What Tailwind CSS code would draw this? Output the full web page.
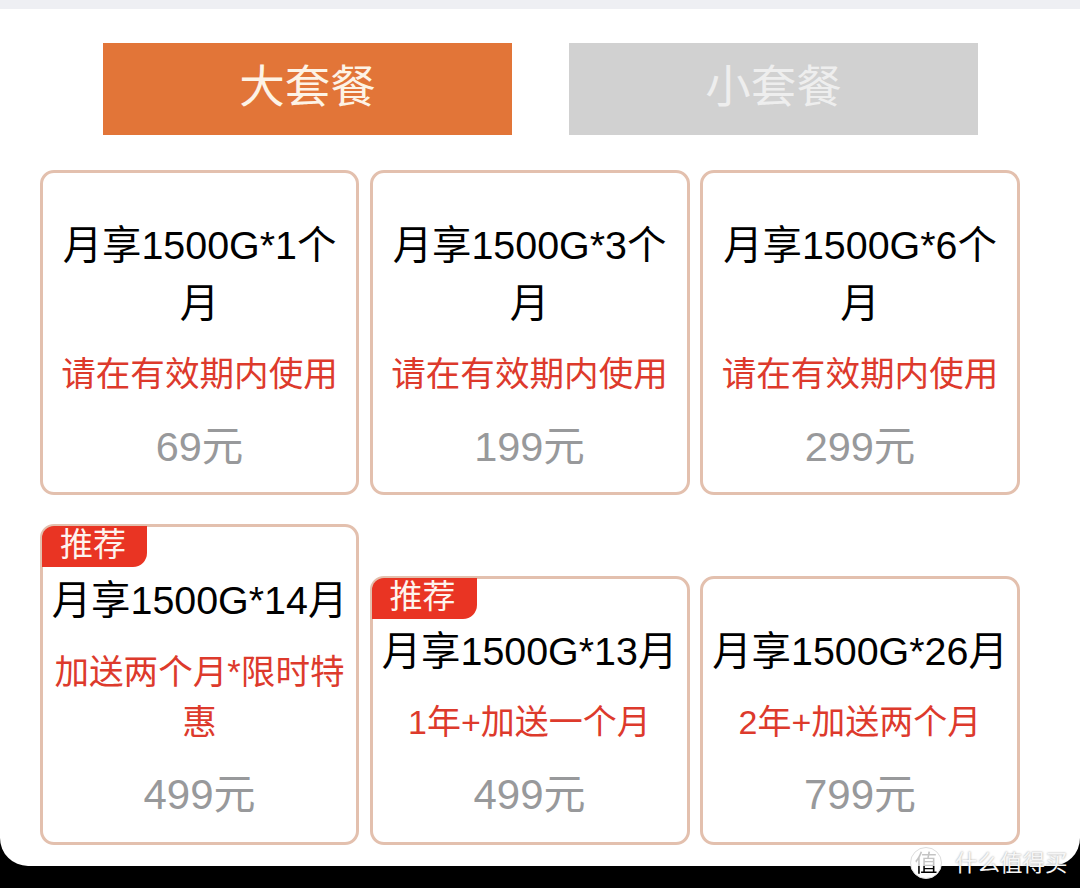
<!DOCTYPE html>
<html lang="zh-CN">
<head>
    <meta charset="UTF-8">
    <meta name="viewport" content="width=device-width, initial-scale=1.0">
    <title>套餐</title>
    <script src="https://cdn.jsdelivr.net/npm/@tailwindcss/browser@4"></script>
</head>
<body class="relative h-[888px] w-[1080px] overflow-hidden bg-black font-['Liberation_Sans','Noto_Sans_CJK_SC',sans-serif]">
    <div class="h-[866px] overflow-hidden rounded-b-[28px] bg-white">
        <div class="h-[9px] bg-[#eeeff3]"></div>

        <!-- tabs -->
        <div class="mt-[34px] flex justify-between pl-[103px] pr-[102px]">
            <div class="flex h-[92px] w-[409px] items-center justify-center bg-[#e27538] pb-[2px] text-[45.5px] text-[#fdf3e6]">大套餐</div>
            <div class="flex h-[92px] w-[409px] items-center justify-center bg-[#d1d1d1] pb-[2px] text-[45.5px] text-[#eeeeee]">小套餐</div>
        </div>

        <!-- first row -->
        <div class="mt-[35px] grid grid-cols-[319px_320px_320px] items-end gap-x-[10.5px] px-[40px]">
            <div class="flex h-[325px] flex-col items-center rounded-[14px] border-[3px] border-[#e3c0ae] px-[10px] pt-[43px] text-center">
                <div class="text-[39.4px] leading-[58px] text-black">月享1500G*1个月</div>
                <div class="mt-[17px] text-[34.6px] leading-[50px] text-[#dd3a2c]">请在有效期内使用</div>
                <div class="mt-[23px] text-[41.5px] leading-[50px] text-[#98999b]">69元</div>
            </div>
            <div class="flex h-[325px] flex-col items-center rounded-[14px] border-[3px] border-[#e3c0ae] px-[10px] pt-[43px] text-center">
                <div class="text-[39.4px] leading-[58px] text-black">月享1500G*3个月</div>
                <div class="mt-[17px] text-[34.6px] leading-[50px] text-[#dd3a2c]">请在有效期内使用</div>
                <div class="mt-[23px] text-[41.5px] leading-[50px] text-[#98999b]">199元</div>
            </div>
            <div class="flex h-[325px] flex-col items-center rounded-[14px] border-[3px] border-[#e3c0ae] px-[10px] pt-[43px] text-center">
                <div class="text-[39.4px] leading-[58px] text-black">月享1500G*6个月</div>
                <div class="mt-[17px] text-[34.6px] leading-[50px] text-[#dd3a2c]">请在有效期内使用</div>
                <div class="mt-[23px] text-[41.5px] leading-[50px] text-[#98999b]">299元</div>
            </div>
        </div>

        <!-- second row, cards sit on the same bottom line -->
        <div class="mt-[29px] grid grid-cols-[319px_320px_320px] items-end gap-x-[10.5px] px-[40px]">
            <div class="relative flex h-[321px] flex-col items-center rounded-[14px] border-[3px] border-[#e3c0ae] px-[10px] pt-[44px] text-center">
                <div class="absolute left-[-1px] top-[-1px] flex h-[41px] w-[105px] items-center justify-center rounded-tl-[12px] rounded-br-[14px] bg-[#e93423] pb-[3px] pr-[3px] text-[33px] text-[#fdf3ee]">推荐</div>
                <div class="whitespace-nowrap text-[39.4px] leading-[58px] text-black">月享1500G*14月</div>
                <div class="mt-[18px] text-[34.6px] leading-[50px] text-[#dd3a2c]">加送两个月*限时特惠</div>
                <div class="mt-[23px] text-[42px] leading-[50px] text-[#98999b]">499元</div>
            </div>
            <div class="relative flex h-[269px] flex-col items-center rounded-[14px] border-[3px] border-[#e3c0ae] px-[10px] pt-[43px] text-center">
                <div class="absolute left-[-1px] top-[-1px] flex h-[41px] w-[105px] items-center justify-center rounded-tl-[12px] rounded-br-[14px] bg-[#e93423] pb-[3px] pr-[3px] text-[33px] text-[#fdf3ee]">推荐</div>
                <div class="whitespace-nowrap text-[39.4px] leading-[58px] text-black">月享1500G*13月</div>
                <div class="mt-[17px] text-[34px] leading-[50px] text-[#dd3a2c]">1年+加送一个月</div>
                <div class="mt-[23px] text-[42px] leading-[50px] text-[#98999b]">499元</div>
            </div>
            <div class="flex h-[269px] flex-col items-center rounded-[14px] border-[3px] border-[#e3c0ae] px-[10px] pt-[43px] text-center">
                <div class="whitespace-nowrap text-[39.4px] leading-[58px] text-black">月享1500G*26月</div>
                <div class="mt-[17px] text-[34px] leading-[50px] text-[#dd3a2c]">2年+加送两个月</div>
                <div class="mt-[23px] text-[42px] leading-[50px] text-[#98999b]">799元</div>
            </div>
        </div>
    </div>

    <!-- watermark over the panel edge -->
    <div class="absolute left-[910px] top-[847px] flex items-center gap-[13px] text-[#f6f6f6] [text-shadow:0_0_2px_rgba(0,0,0,0.4)]">
        <div class="flex h-[32px] w-[32px] items-center justify-center rounded-full border border-[#dddddd] bg-white">
            <span class="bg-[linear-gradient(#c4c4c4_0,#c4c4c4_60%,#000000_60%)] bg-clip-text text-[23px] leading-[32px] text-transparent [text-shadow:none]">值</span>
        </div>
        <div class="text-[22.5px] leading-[31px]">什么值得买</div>
    </div>
</body>
</html>
